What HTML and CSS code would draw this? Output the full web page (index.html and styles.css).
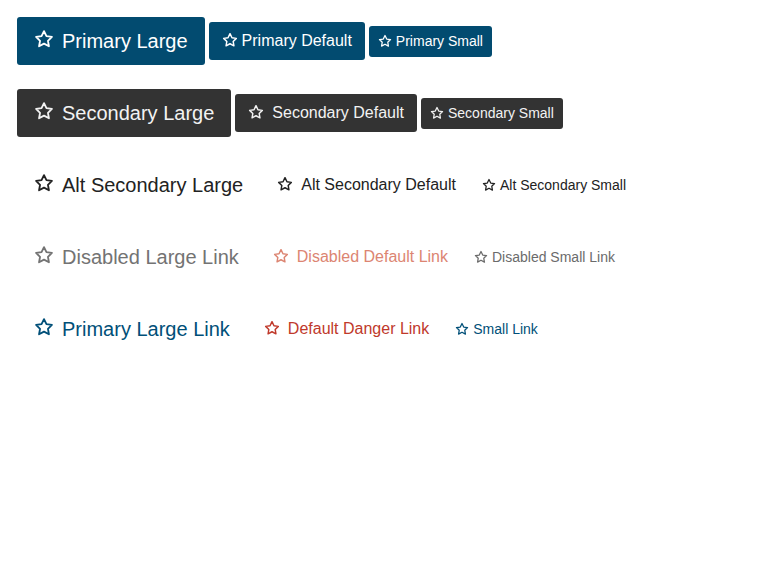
FILE: index.html
```html
<!DOCTYPE html>
<html>
<head>
<meta charset="utf-8">
<link rel="stylesheet" href="styles.css">
</head>
<body>
<svg width="0" height="0" style="position:absolute">
  <defs>
    <symbol id="star" viewBox="0 0 24 24">
      <path d="M12 2.5l2.95 6.1 6.55.95-4.75 4.6 1.15 6.55L12 17.6l-5.9 3.1 1.15-6.55-4.75-4.6 6.55-.95z" fill="none" stroke="currentColor" stroke-width="2.2" stroke-linejoin="round"/>
    </symbol>
  </defs>
</svg>
<main class="page">
  <div class="row">
    <a class="btn lg primary"><svg class="ic"><use href="#star"/></svg>Primary Large</a>
    <a class="btn md primary tight"><svg class="ic"><use href="#star"/></svg>Primary Default</a>
    <a class="btn sm primary"><svg class="ic"><use href="#star"/></svg>Primary Small</a>
  </div>
  <div class="row">
    <a class="btn lg secondary"><svg class="ic"><use href="#star"/></svg>Secondary Large</a>
    <a class="btn md secondary"><svg class="ic"><use href="#star"/></svg>Secondary Default</a>
    <a class="btn sm secondary"><svg class="ic"><use href="#star"/></svg>Secondary Small</a>
  </div>
  <div class="row">
    <a class="btn lg alt"><svg class="ic"><use href="#star"/></svg>Alt Secondary Large</a>
    <a class="btn md alt"><svg class="ic"><use href="#star"/></svg>Alt Secondary Default</a>
    <a class="btn sm alt"><svg class="ic"><use href="#star"/></svg>Alt Secondary Small</a>
  </div>
  <div class="row">
    <a class="btn lg disabled"><svg class="ic"><use href="#star"/></svg>Disabled Large Link</a>
    <a class="btn md disabled-danger"><svg class="ic"><use href="#star"/></svg>Disabled Default Link</a>
    <a class="btn sm disabled-sm"><svg class="ic"><use href="#star"/></svg>Disabled Small Link</a>
  </div>
  <div class="row">
    <a class="btn lg link"><svg class="ic"><use href="#star"/></svg>Primary Large Link</a>
    <a class="btn md danger"><svg class="ic"><use href="#star"/></svg>Default Danger Link</a>
    <a class="btn sm link"><svg class="ic"><use href="#star"/></svg>Small Link</a>
  </div>
</main>
</body>
</html>
```

FILE: styles.css
```css
html, body {
  margin: 0;
  padding: 0;
  background: #fff;
}
body {
  font-family: "Liberation Sans", Arial, sans-serif;
}
.page {
  display: flex;
  flex-direction: column;
  gap: 24px;
  padding: 17px 0 0 17px;
}
.row {
  display: flex;
  align-items: center;
  gap: 4px;
}
.btn {
  display: inline-flex;
  align-items: center;
  box-sizing: border-box;
  border-radius: 3px;
  white-space: nowrap;
  text-decoration: none;
  line-height: 1;
}
.btn .ic {
  flex: none;
}
.lg {
  height: 48px;
  padding: 0 17px;
  font-size: 20px;
}
.lg .ic {
  width: 20px;
  height: 20px;
  margin-right: 8px;
  margin-bottom: 4px;
}
.md {
  height: 38px;
  padding: 0 13px;
  font-size: 16px;
}
.md .ic {
  width: 16px;
  height: 16px;
  margin-right: 8px;
  margin-bottom: 2px;
}
.md.tight .ic {
  margin-right: 4px;
}
.sm {
  height: 31px;
  padding: 0 9px;
  font-size: 14px;
}
.sm .ic {
  width: 14px;
  height: 14px;
  margin-right: 4px;
  margin-bottom: 1px;
}
.primary {
  background: #024b70;
  color: #fff;
}
.secondary {
  background: #333333;
  color: #f2f2f2;
}
.alt {
  color: #222222;
}
.disabled {
  color: #737373;
}
.disabled-danger {
  color: #dc8572;
}
.disabled-sm {
  color: #6b6b6b;
}
.link {
  color: #004f78;
}
.danger {
  color: #c0392b;
}
```
